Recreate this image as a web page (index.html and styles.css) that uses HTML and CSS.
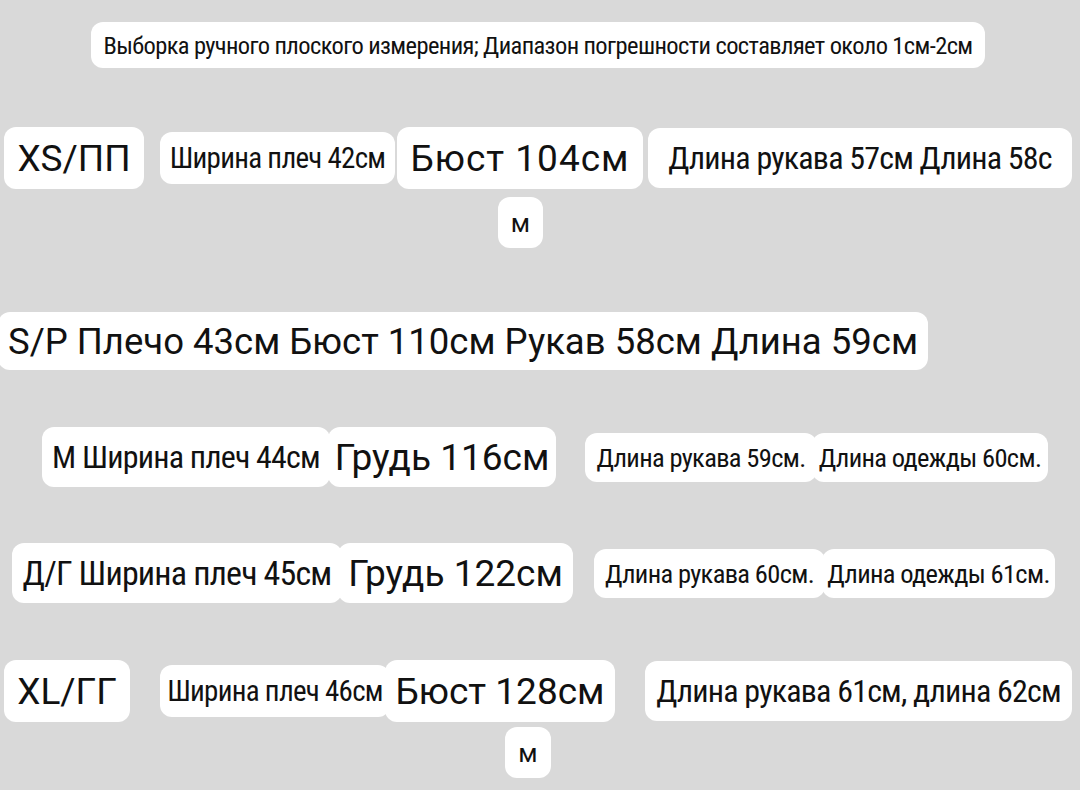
FILE: index.html
```html
<!DOCTYPE html>
<html lang="ru">
<head>
    <meta charset="UTF-8">
    <meta name="viewport" content="width=device-width, initial-scale=1.0">
    <title>Размеры</title>
    <link rel="stylesheet" href="styles.css">
</head>
<body>
    <div class="sheet">
        <div class="row row-note">
            <span class="chip narrow note">Выборка ручного плоского измерения; Диапазон погрешности составляет около 1см-2см</span>
        </div>

        <div class="row row-xs">
            <span class="chip wide tag">XS/ПП</span>
            <span class="chip narrow small shoulder">Ширина плеч 42см</span>
            <span class="chip wide bust">Бюст 104см</span>
            <span class="chip narrow mid sleeve">Длина рукава 57см Длина 58с</span>
        </div>
        <div class="row row-tail tail-xs">
            <span class="chip wide tail">м</span>
        </div>

        <div class="row row-s">
            <span class="chip wide line">S/P Плечо 43см Бюст 110см Рукав 58см Длина 59см</span>
        </div>

        <div class="row row-m">
            <span class="chip narrow mid lead-m">М Ширина плеч 44см</span>
            <span class="chip wide chest chest-m">Грудь 116см</span>
            <span class="chip narrow tiny sleeve-m">Длина рукава 59см.</span>
            <span class="chip narrow tiny cloth-m">Длина одежды 60см.</span>
        </div>

        <div class="row row-l">
            <span class="chip narrow mid lead-l">Д/Г Ширина плеч 45см</span>
            <span class="chip wide chest chest-l">Грудь 122см</span>
            <span class="chip narrow tiny sleeve-l">Длина рукава 60см.</span>
            <span class="chip narrow tiny cloth-l">Длина одежды 61см.</span>
        </div>

        <div class="row row-xl">
            <span class="chip wide tag tag-xl">XL/ГГ</span>
            <span class="chip narrow small shoulder-xl">Ширина плеч 46см</span>
            <span class="chip wide bust-xl">Бюст 128см</span>
            <span class="chip narrow mid sleeve-xl">Длина рукава 61см, длина 62см</span>
        </div>
        <div class="row row-tail tail-xl">
            <span class="chip wide tail tail-wide">м</span>
        </div>
    </div>
</body>
</html>
```

FILE: styles.css
```css
body {
    margin: 0;
    background-color: #d9d9d9;
    color: #111;
}
.sheet {
    width: 1080px;
    height: 790px;
    overflow: hidden;
    display: flex;
    flex-direction: column;
}
.row {
    display: flex;
    align-items: center;
}
.chip {
    display: flex;
    align-items: center;
    justify-content: center;
    flex-shrink: 0;
    background-color: #fff;
    border-radius: 12px;
    white-space: nowrap;
    box-sizing: border-box;
}
.wide {
    font-family: Roboto, "Noto Sans", sans-serif;
    font-size: 37px;
    height: 62px;
}
.narrow {
    font-family: "Roboto Condensed", "Liberation Sans Narrow", "Open Sans", sans-serif;
    font-stretch: 75%;
    letter-spacing: -0.025em;
}
.note {
    font-size: 24.5px;
    width: 894px;
    height: 46px;
}
.small {
    font-size: 29px;
    height: 52px;
}
.mid {
    font-size: 32px;
    height: 60px;
}
.tiny {
    font-size: 26.5px;
    height: 49px;
}

/* rows */
.row-note {
    padding: 22px 0 0 91px;
}
.row-xs {
    margin-top: 59px;
    padding-left: 4px;
}
.row-tail {
    margin-top: 8px;
}
.tail-xs {
    padding-left: 498px;
}
.tail-xl {
    padding-left: 505px;
    margin-top: 5px;
}
.tail {
    font-size: 26px;
    width: 45px;
    height: 51px;
}
.tail-wide {
    width: 46px;
}
.row-s {
    margin-top: 64px;
    margin-left: -2px;
}
.row-m {
    margin-top: 57px;
    padding-left: 42px;
}
.row-l {
    margin-top: 56px;
    padding-left: 12px;
}
.row-xl {
    margin-top: 57px;
    padding-left: 4px;
}

/* chip sizes */
.tag {
    width: 140px;
}
.tag-xl {
    width: 126px;
}
.shoulder {
    width: 235px;
    margin-left: 16px;
}
.bust {
    width: 246px;
    margin-left: 2px;
    letter-spacing: 1px;
}
.sleeve {
    width: 424px;
    margin-left: 5px;
}
.line {
    width: 930px;
    height: 58px;
    font-size: 36.5px;
}
.lead-m {
    width: 288px;
}
.chest {
    height: 60px;
}
.chest-m {
    width: 228px;
    margin-left: -2px;
}
.sleeve-m {
    width: 232px;
    margin-left: 29px;
}
.cloth-m {
    width: 236px;
    margin-left: -5px;
}
.lead-l {
    width: 330px;
    font-size: 34px;
}
.chest-l {
    width: 235px;
    margin-left: -4px;
}
.sleeve-l {
    width: 231px;
    margin-left: 21px;
}
.cloth-l {
    width: 233px;
    margin-left: -3px;
}
.shoulder-xl {
    width: 230px;
    margin-left: 30px;
}
.bust-xl {
    width: 230px;
    margin-left: -5px;
}
.sleeve-xl {
    width: 427px;
    margin-left: 30px;
}
```
